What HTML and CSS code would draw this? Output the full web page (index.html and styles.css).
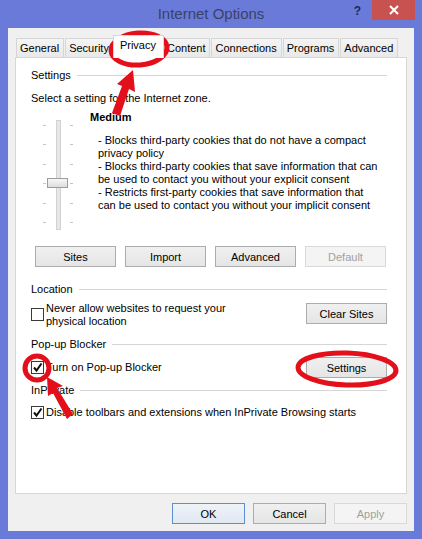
FILE: index.html
```html
<!DOCTYPE html>
<html lang="en">
<head>
    <meta charset="UTF-8">
    <meta name="viewport" content="width=device-width, initial-scale=1.0">
    <title>Internet Options</title>
    <link rel="stylesheet" href="styles.css">
</head>
<body>
    <div class="window">
        <div class="titlebar">
            <span></span>
            <span class="title">Internet Options</span>
            <div class="controls">
                <span class="help">?</span>
                <span class="close">
                    <svg width="10" height="10" viewBox="0 0 10 10"><path d="M1 1 L9 9 M9 1 L1 9" stroke="#fff" stroke-width="2"/></svg>
                </span>
            </div>
        </div>

        <div class="client">
            <div class="tabs">
                <div class="tab">General</div>
                <div class="tab">Security</div>
                <div class="tab active">Privacy</div>
                <div class="tab">Content</div>
                <div class="tab">Connections</div>
                <div class="tab">Programs</div>
                <div class="tab">Advanced</div>
            </div>

            <div class="panel">
                <div class="legend legend-first">Settings</div>
                <p class="hint">Select a setting for the Internet zone.</p>

                <div class="zone">
                    <div class="slider">
                        <span class="tick l" style="top:7px"></span><span class="tick r" style="top:7px"></span>
                        <span class="tick l" style="top:26px"></span><span class="tick r" style="top:26px"></span>
                        <span class="tick l" style="top:46px"></span><span class="tick r" style="top:46px"></span>
                        <span class="tick l" style="top:65px"></span><span class="tick r" style="top:65px"></span>
                        <span class="tick l" style="top:85px"></span><span class="tick r" style="top:85px"></span>
                        <span class="tick l" style="top:104px"></span><span class="tick r" style="top:104px"></span>
                        <span class="track"></span>
                        <span class="thumb"></span>
                    </div>
                    <div class="level">
                        <div class="level-name">Medium</div>
                        <div class="level-desc">
                            - Blocks third-party cookies that do not have a compact<br>
                            privacy policy<br>
                            - Blocks third-party cookies that save information that can<br>
                            be used to contact you without your explicit consent<br>
                            - Restricts first-party cookies that save information that<br>
                            can be used to contact you without your implicit consent
                        </div>
                    </div>
                </div>

                <div class="btn-row">
                    <button class="btn">Sites</button>
                    <button class="btn">Import</button>
                    <button class="btn">Advanced</button>
                    <button class="btn" disabled>Default</button>
                </div>

                <div class="legend legend-location">Location</div>
                <div class="row row-location">
                    <span class="check"></span>
                    <span class="label">Never allow websites to request your<br>physical location</span>
                    <button class="btn btn-side">Clear Sites</button>
                </div>

                <div class="legend legend-popup">Pop-up Blocker</div>
                <div class="row row-popup">
                    <span class="check checked">
                        <svg width="11" height="11" viewBox="0 0 11 11"><path d="M2 5.5 L4.5 8.5 L9.5 1.5" fill="none" stroke="#111" stroke-width="2"/></svg>
                    </span>
                    <span class="label">Turn on Pop-up Blocker</span>
                    <button class="btn btn-side">Settings</button>
                </div>

                <div class="legend legend-private">InPrivate</div>
                <div class="row row-private">
                    <span class="check checked">
                        <svg width="11" height="11" viewBox="0 0 11 11"><path d="M2 5.5 L4.5 8.5 L9.5 1.5" fill="none" stroke="#111" stroke-width="2"/></svg>
                    </span>
                    <span class="label">Disable toolbars and extensions when InPrivate Browsing starts</span>
                </div>
            </div>

            <div class="footer">
                <button class="btn btn-small default">OK</button>
                <button class="btn btn-small">Cancel</button>
                <button class="btn btn-small" disabled>Apply</button>
            </div>
        </div>

        <!-- red annotation marks drawn over the dialog -->
        <svg class="marks" width="422" height="539" viewBox="0 0 422 539">
            <g fill="none" stroke="#e3101c" stroke-width="5">
                <ellipse cx="139" cy="49" rx="28" ry="16" transform="rotate(-4 139 49)"/>
                <circle cx="37" cy="368" r="12"/>
                <ellipse cx="347" cy="369" rx="49" ry="16" transform="rotate(2 347 369)"/>
            </g>
            <g fill="#e3101c">
                <path d="M112 113 L120 116 L129 89 L135 92 L133 70 L117 84 L122 86 Z"/>
                <path d="M67 419 L73 414 L57 388 L63 386 L47 377 L48 396 L53 393 Z"/>
            </g>
        </svg>
    </div>
</body>
</html>
```

FILE: styles.css
```css
body {
    margin: 0;
    background: #6a7ad8;
    font-family: "Liberation Sans", Arial, sans-serif;
    font-size: 11px;
    color: #000;
}
.window {
    position: relative;
    width: 422px;
    height: 539px;
    display: flex;
    flex-direction: column;
}
.titlebar {
    height: 28px;
    display: grid;
    grid-template-columns: 1fr auto 1fr;
    flex: none;
}
.title {
    font-size: 15px;
    line-height: 27px;
    color: #3a4268;
}
.controls {
    display: flex;
    justify-content: flex-end;
    align-items: flex-start;
    padding-right: 7px;
}
.help {
    font-weight: bold;
    font-size: 12px;
    line-height: 22px;
    color: #1d2760;
    margin-right: 11px;
}
.close {
    width: 43px;
    height: 20px;
    background: #c85250;
    display: flex;
    align-items: center;
    justify-content: center;
}
.client {
    margin: 0 8px;
    height: 503px;
    box-sizing: border-box;
    background: #f0f0f0;
    padding: 7px 7px 0;
    display: flex;
    flex-direction: column;
}
.tabs {
    height: 22px;
    display: flex;
    align-items: flex-end;
    padding-left: 1px;
}
.tab {
    height: 19px;
    box-sizing: border-box;
    border: 1px solid #d6d6d6;
    border-bottom: none;
    padding: 0 4px 0 3px;
    margin-right: 1px;
    line-height: 18px;
    background: linear-gradient(to bottom, #f4f4f4, #e9e9e9);
}
.tab.active {
    position: relative;
    z-index: 1;
    height: 23px;
    margin: 0 -1px -1px -2px;
    padding: 0 7px 0 6px;
    line-height: 19px;
    background: #fff;
}
.panel {
    height: 437px;
    box-sizing: border-box;
    border: 1px solid #d6d6d6;
    background: #fff;
    padding: 0 19px 0 15px;
}
.legend {
    display: flex;
    align-items: center;
    line-height: 14px;
}
.legend::after {
    content: "";
    flex: 1;
    height: 1px;
    margin-left: 6px;
    background: #d5d5d5;
}
.legend-first { margin-top: 10px; }
.legend-location { margin-top: 15px; }
.legend-popup { margin-top: 9px; }
.legend-private { margin-top: 5px; }
.hint {
    margin: 9px 0 0;
    line-height: 14px;
}
.zone {
    display: flex;
    height: 126px;
    margin-top: 5px;
}
.slider {
    position: relative;
    width: 59px;
    height: 112px;
    margin-top: 8px;
    flex: none;
}
.tick {
    position: absolute;
    width: 3px;
    height: 1px;
    background: #c4c4c4;
}
.tick.l { left: 12px; }
.tick.r { left: 39px; }
.track {
    position: absolute;
    left: 25px;
    top: 2px;
    width: 3px;
    height: 108px;
    background: #e7e7e7;
    border: 1px solid #d2d2d2;
}
.thumb {
    position: absolute;
    left: 16px;
    top: 60px;
    width: 21px;
    height: 10px;
    box-sizing: border-box;
    border: 1px solid #9c9c9c;
    background: linear-gradient(to bottom, #f7f7f7, #dedede);
}
.level-name {
    font-weight: bold;
    line-height: 14px;
}
.level-desc {
    margin-top: 10px;
    padding-left: 8px;
    line-height: 13px;
    white-space: nowrap;
}
.btn {
    width: 81px;
    height: 21px;
    box-sizing: border-box;
    padding: 0;
    border: 1px solid #acacac;
    background: linear-gradient(to bottom, #f0f0f0, #e5e5e5);
    font: inherit;
    color: #000;
}
.btn:disabled {
    border-color: #d9d9d9;
    background: #f4f4f4;
    color: #a0a0a0;
}
.btn-row {
    display: flex;
    gap: 9px;
    margin: 10px 0 0 4px;
}
.row {
    display: flex;
    align-items: center;
}
.check {
    width: 13px;
    height: 13px;
    box-sizing: border-box;
    border: 1px solid #3a3a3a;
    background: #fff;
    margin-right: 2px;
    flex: none;
    display: flex;
    align-items: center;
    justify-content: center;
}
.label {
    line-height: 13px;
    white-space: nowrap;
}
.btn-side {
    margin-left: auto;
}
.row-location {
    align-items: flex-start;
    margin-top: 6px;
}
.row-location .check { margin-top: 6px; }
.row-location .btn-side { margin-top: 1px; }
.row-popup {
    height: 21px;
    margin-top: 6px;
}
.row-private {
    height: 14px;
    margin-top: 8px;
}
.footer {
    display: flex;
    justify-content: flex-end;
    gap: 8px;
    margin-top: 9px;
}
.btn-small {
    width: 73px;
}
.btn.default {
    border-color: #5c8fcf;
    background: linear-gradient(to bottom, #eef3f9, #e1e8f1);
}
.marks {
    position: absolute;
    top: 0;
    left: 0;
    pointer-events: none;
}
```
